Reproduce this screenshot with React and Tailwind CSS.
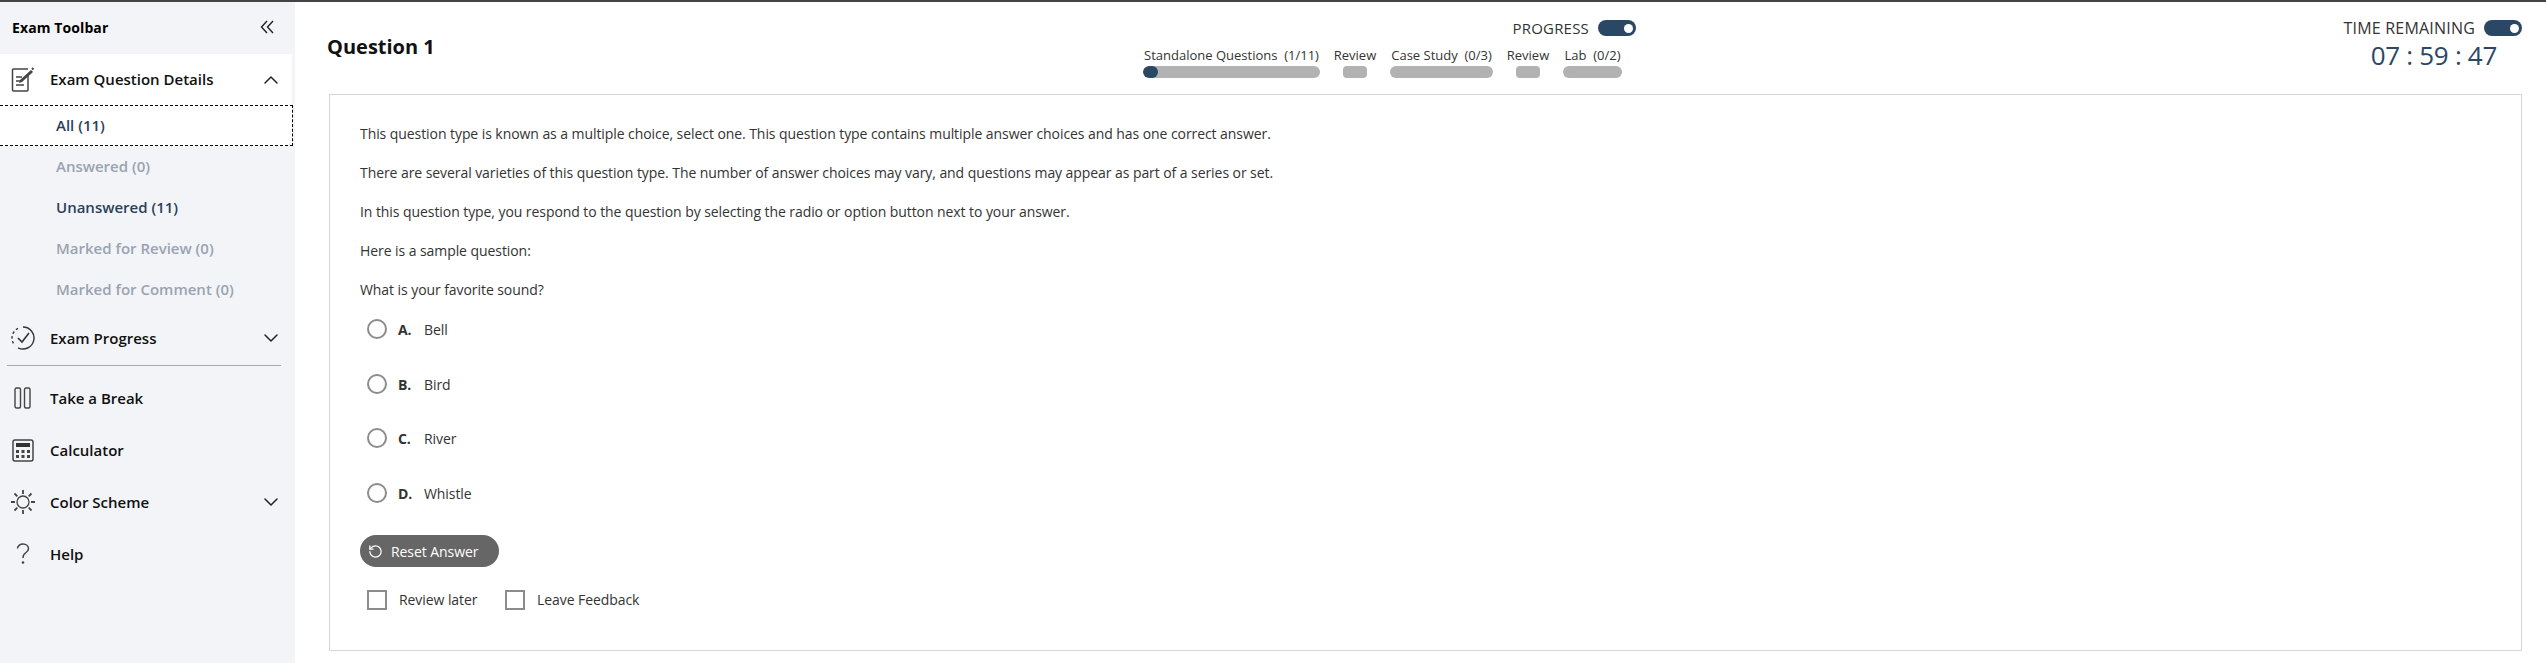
import React from 'react';
import { ChevronUp, ChevronDown, RotateCcw } from 'lucide-react';

const CollapseIcon = () => (
  <svg width="14" height="14" viewBox="0 0 14 14" fill="none" stroke="#222" strokeWidth="1.4">
    <path d="M7 1L1.500 7 7 13" />
    <path d="M13 1L7.500 7 13 13" />
  </svg>
);

const DetailsIcon = () => (
  <svg width="24" height="26" viewBox="0 0 24 26" fill="none" stroke="#444" strokeWidth="1.5">
    <path d="M17 8.500V23a1 1 0 0 1-1 1H2.500a1 1 0 0 1-1-1V3a1 1 0 0 1 1-1H17" />
    <path d="M5 10h6M5 14h6M5 18h8" />
    <path d="M8 16l1-3L20 3l2 2L11 15z" fill="#444" stroke="none" />
    <path d="M21 1l1.500 1.500" strokeWidth="2" />
  </svg>
);

const ProgressIcon = () => (
  <svg width="24" height="24" viewBox="0 0 24 24" fill="none" stroke="#333" strokeWidth="1.4">
    <path d="M12 1a11 11 0 1 1-5 20.800" />
    <path d="M7 2.300A11 11 0 0 0 1 12a11 11 0 0 0 3 7.500" strokeDasharray="2.500 2.500" />
    <path d="M7 12l4 4 7-9" strokeWidth="1.600" />
  </svg>
);

const BreakIcon = () => (
  <svg width="17" height="22" viewBox="0 0 17 22" fill="none" stroke="#444" strokeWidth="1.4">
    <rect x="1" y="1" width="5.500" height="20" rx="1.500" />
    <rect x="10.500" y="1" width="5.500" height="20" rx="1.500" />
  </svg>
);

const CalculatorIcon = () => (
  <svg width="22" height="23" viewBox="0 0 22 23" fill="none">
    <rect x="1" y="1" width="20" height="21" rx="2" stroke="#444" strokeWidth="1.500" />
    <rect x="4" y="4" width="14" height="4" fill="#333" />
    <path d="M4 11h3v3H4zM9.500 11h3v3h-3zM15 11h3v3h-3zM4 16h3v3H4zM9.500 16h3v3h-3zM15 16h3v3h-3z" fill="#444" />
  </svg>
);

const SchemeIcon = () => (
  <svg width="26" height="26" viewBox="0 0 26 26" fill="none" stroke="#444">
    <circle cx="13" cy="13" r="6" strokeWidth="1.300" />
    <path d="M13 1v4M13 21v4M1 13h4M21 13h4M4.500 4.500l2.800 2.800M18.700 18.700l2.800 2.800M21.500 4.500l-2.800 2.800M7.300 18.700l-2.800 2.800" strokeWidth="1.800" />
  </svg>
);

const HelpIcon = () => (
  <svg width="14" height="22" viewBox="0 0 14 22" fill="none" stroke="#444" strokeWidth="1.500">
    <path d="M1.500 5.500C1.500 3 4 1 7 1s5.500 2 5.500 4.800c0 2-1.200 3-3 4.200C8 11 7 12 7 15" />
    <circle cx="7" cy="19.500" r="1.300" fill="#444" stroke="none" />
  </svg>
);

const Toggle = () => (
  <div className="flex h-4 w-[38px] items-center justify-end rounded-full bg-[#2b4766] pr-[3px]">
    <div className="h-[9px] w-[9px] rounded-full bg-white" />
  </div>
);

const filters = [
  { label: 'All (11)', active: true, selected: true },
  { label: 'Answered (0)' },
  { label: 'Unanswered (11)', active: true },
  { label: 'Marked for Review (0)' },
  { label: 'Marked for Comment (0)' },
];

const sections = [
  { name: 'standalone', label: 'Standalone Questions\u00a0\u00a0(1/11)', w: 'w-[177px]', bar: 'w-[177px] rounded-full', fill: true },
  { name: 'review1', label: 'Review', w: 'w-[41px]', bar: 'w-[24px] rounded-[4px]' },
  { name: 'case', label: 'Case Study\u00a0\u00a0(0/3)', w: 'w-[103px]', bar: 'w-[103px] rounded-full' },
  { name: 'review2', label: 'Review', w: 'w-[41px]', bar: 'w-[24px] rounded-[4px]' },
  { name: 'lab', label: 'Lab\u00a0\u00a0(0/2)', w: 'w-[59px]', bar: 'w-[59px] rounded-full' },
];

const options = [
  { key: 'A.', text: 'Bell', mb: 'mb-[35px]' },
  { key: 'B.', text: 'Bird', mb: 'mb-[34px]' },
  { key: 'C.', text: 'River', mb: 'mb-[35px]' },
  { key: 'D.', text: 'Whistle', mb: 'mb-[32px]' },
];

const paragraphs = [
  'This question type is known as a multiple choice, select one. This question type contains multiple answer choices and has one correct answer.',
  'There are several varieties of this question type. The number of answer choices may vary, and questions may appear as part of a series or set.',
  'In this question type, you respond to the question by selecting the radio or option button next to your answer.',
  'Here is a sample question:',
  'What is your favorite sound?',
];

const SideRow = ({ icon, label, chevron, className = '' }) => (
  <div className={`flex items-center ${className}`}>
    <div className="flex w-[50px] shrink-0 justify-center pr-[5px]">{icon}</div>
    <span className="flex-1 text-[15px] font-semibold text-[#111]">{label}</span>
    {chevron && <ChevronDown size={24} strokeWidth={1.5} className="mr-[12px] text-[#222]" />}
  </div>
);

const Sidebar = () => (
  <aside className="flex w-[295px] shrink-0 flex-col bg-[#f3f4f7]">
    <div className="flex h-[52px] items-center justify-between pb-[2px] pl-[12px] pr-[21px]">
      <span className="text-[14px] font-bold tracking-[0.1px] text-black">Exam Toolbar</span>
      <CollapseIcon />
    </div>
    <div className="flex h-[51px] w-[292px] items-center bg-white">
      <div className="flex w-[50px] shrink-0 justify-center pr-[5px]"><DetailsIcon /></div>
      <span className="flex-1 text-[15px] font-semibold text-[#111]">Exam Question Details</span>
      <ChevronUp size={24} strokeWidth={1.5} className="mr-[9px] text-[#222]" />
    </div>
    {filters.map((f) => (
      <div
        key={f.label}
        className={`flex h-[41px] w-[293px] items-center pl-[56px] text-[15px] font-semibold ${f.active ? 'text-[#2b3f5c]' : 'text-[#9aa3b2]'} ${f.selected ? 'border border-l-0 border-dashed border-black bg-white' : ''}`}
      >
        {f.label}
      </div>
    ))}
    <SideRow icon={<ProgressIcon />} label="Exam Progress" chevron className="mt-px h-[54px]" />
    <div className="ml-[7px] h-px w-[274px] bg-[#a9a9a9]" />
    <SideRow icon={<BreakIcon />} label="Take a Break" className="mt-[6px] h-[52px]" />
    <SideRow icon={<CalculatorIcon />} label="Calculator" className="h-[52px]" />
    <SideRow icon={<SchemeIcon />} label="Color Scheme" chevron className="h-[52px]" />
    <SideRow icon={<HelpIcon />} label="Help" className="h-[52px]" />
  </aside>
);

const Header = () => (
  <header className="flex h-[92px] items-start pl-[32px] pr-[24px]">
    <h1 className="mt-[31px] w-[816px] shrink-0 text-[20px] font-bold leading-[28px] text-[#111]">Question 1</h1>
    <div className="mt-[16px] flex w-[493px] shrink-0 flex-col">
      <div className="flex items-center justify-end gap-[9px]">
        <span className="text-[15px] leading-[20px] tracking-[0.2px] text-[#333]">PROGRESS</span>
        <Toggle />
      </div>
      <div className="mt-[9px] flex gap-[14.500px]">
        {sections.map((s) => (
          <div key={s.name} className={`flex ${s.w} shrink-0 flex-col items-center`}>
            <span className="whitespace-nowrap text-[13px] leading-[16px] text-[#333]">{s.label}</span>
            <div className={`mt-[3px] h-3 overflow-hidden bg-[#b2b2b2] ${s.bar}`}>
              {s.fill && <div className="h-3 w-[15px] rounded-full bg-[#2b4766]" />}
            </div>
          </div>
        ))}
      </div>
    </div>
    <div className="mt-[16px] flex flex-1 flex-col items-end">
      <div className="flex items-center gap-[9px]">
        <span className="text-[16px] leading-[20px] tracking-[0.2px] text-[#333]">TIME REMAINING</span>
        <Toggle />
      </div>
      <div className="mr-[25px] text-[26px] leading-[34px] tracking-[-0.3px] text-[#2b4766]">07 : 59 : 47</div>
    </div>
  </header>
);

const Card = () => (
  <section className="ml-[34px] mr-[24px] h-[557px] border border-[#d6d6d6] px-[30px] pt-[29px] text-[14px] tracking-[-0.07px] text-[#333]">
    {paragraphs.map((p) => (
      <p key={p} className="mb-[19px] leading-[20px]">{p}</p>
    ))}
    <div className="ml-[7px] mt-[3px]">
      {options.map((o) => (
        <div key={o.key} className={`flex h-5 items-center ${o.mb}`}>
          <span className="h-5 w-5 rounded-full border-2 border-[#8c8c8c]" />
          <span className="ml-[11px] w-[26px] font-bold">{o.key}</span>
          <span>{o.text}</span>
        </div>
      ))}
    </div>
    <button className="flex h-8 w-[139px] items-center gap-[8px] rounded-full bg-[#666] pl-[8px] text-[14px] text-white">
      <RotateCcw size={15} strokeWidth={2} />
      Reset Answer
    </button>
    <div className="ml-[7px] mt-[22px] flex items-center">
      <span className="h-5 w-5 border-2 border-[#8c8c8c]" />
      <span className="ml-[12px] w-[106px]">Review later</span>
      <span className="h-5 w-5 border-2 border-[#8c8c8c]" />
      <span className="ml-[12px]">Leave Feedback</span>
    </div>
  </section>
);

export default function App() {
  return (
    <div className="flex h-[663px] flex-col overflow-hidden bg-white font-['Open_Sans',sans-serif]">
      <div className="h-[2px] bg-[#444]" />
      <div className="flex flex-1">
        <Sidebar />
        <main className="flex-1">
          <Header />
          <Card />
        </main>
      </div>
    </div>
  );
}
